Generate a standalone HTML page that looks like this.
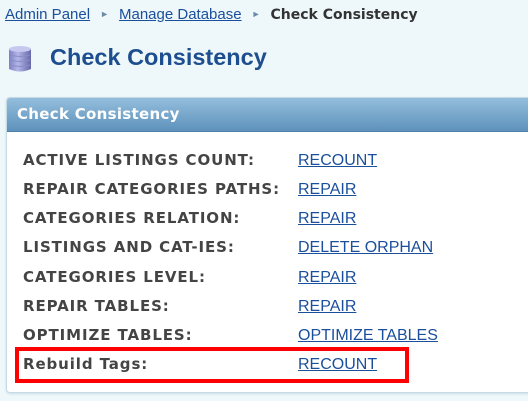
<!DOCTYPE html>
<html><head><style>
body{margin:0;width:528px;height:401px;background:#eef7fa;font-family:"Liberation Sans",sans-serif;overflow:hidden;position:relative}
.bc{position:absolute;left:5px;top:6px;font-size:15px;color:#333;white-space:nowrap}
.bc a{color:#1a4f9c;text-decoration:underline}
.bc .ar{color:#6a8aa8;font-size:9px;margin:0 10px;position:relative;top:-2px}
.bc b{color:#333;font-family:"DejaVu Sans",sans-serif;font-size:14px}
h1{position:absolute;left:50px;top:44px;margin:0;font-size:23.5px;color:#1d4e8f;font-weight:bold;white-space:nowrap}
.icon{position:absolute;left:8px;top:45px}
.panel{position:absolute;left:6px;top:97px;width:540px;height:294px;background:#fff;border:1px solid #c6dbe6;border-radius:4px 0 0 4px;box-shadow:0 1px 2px #ccdde6}
.hd{height:33px;background:linear-gradient(#94bedc,#5e92bc);border-radius:3px 0 0 0;border-bottom:1px solid #4d7fa8;color:#fff;font-weight:bold;font-family:"DejaVu Sans",sans-serif;font-size:15px;line-height:33px;padding-left:10px;letter-spacing:0.3px}
.row{position:absolute;left:23px;font-family:"DejaVu Sans",sans-serif;font-size:15px;font-weight:bold;color:#444;white-space:nowrap;letter-spacing:0.9px}
.row a{position:absolute;left:275px;top:1px;font-family:"Liberation Sans",sans-serif;font-size:16px;font-weight:normal;color:#1a4f9c;text-decoration:underline;letter-spacing:0}
.box{position:absolute;left:15px;top:347px;width:386px;height:28px;border:4px solid #f00}
</style></head><body>
<div class="bc"><a>Admin Panel</a><span class="ar">►</span><a>Manage Database</a><span class="ar">►</span><b>Check Consistency</b></div>
<svg class="icon" width="24" height="28" viewBox="0 0 24 28">
<defs><linearGradient id="g" x1="0" x2="1"><stop offset="0" stop-color="#7d7fc0"/><stop offset=".4" stop-color="#b4b6e8"/><stop offset="1" stop-color="#6668a8"/></linearGradient></defs>
<path d="M1 4 Q12 -1 23 4 V24 Q12 29 1 24Z" fill="url(#g)"/>
<ellipse cx="12" cy="4" rx="11" ry="3" fill="#c6c8ef"/>
<path d="M2 10 Q12 13 22 10 M2 15 Q12 18 22 15 M2 20 Q12 23 22 20" stroke="#8a8cc8" fill="none"/>
</svg>
<h1>Check Consistency</h1>
<div class="panel"><div class="hd">Check Consistency</div></div>
<div class="row" style="top:151px">ACTIVE LISTINGS COUNT:<a>RECOUNT</a></div>
<div class="row" style="top:180px">REPAIR CATEGORIES PATHS:<a>REPAIR</a></div>
<div class="row" style="top:209px">CATEGORIES RELATION:<a>REPAIR</a></div>
<div class="row" style="top:238px">LISTINGS AND CAT-IES:<a>DELETE ORPHAN</a></div>
<div class="row" style="top:268px">CATEGORIES LEVEL:<a>REPAIR</a></div>
<div class="row" style="top:297px">REPAIR TABLES:<a>REPAIR</a></div>
<div class="row" style="top:326px">OPTIMIZE TABLES:<a>OPTIMIZE TABLES</a></div>
<div class="row" style="top:355px">Rebuild Tags:<a>RECOUNT</a></div>
<div class="box"></div>
</body></html>
